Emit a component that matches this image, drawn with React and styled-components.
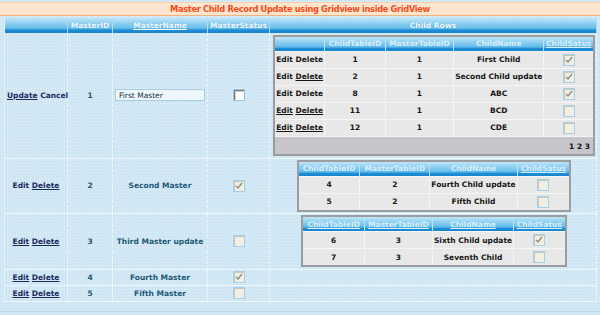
import React from 'react';
import styled, { createGlobalStyle } from 'styled-components';

const GlobalStyle = createGlobalStyle`
  body {
    margin: 0;
    background-color: #cfe7f4;
    background-image: radial-gradient(rgba(255, 255, 255, 0.35) 0.6px, transparent 0.8px);
    background-size: 3px 3px;
    font-family: "DejaVu Sans", Verdana, sans-serif;
  }
`;

const headGradient = `linear-gradient(
  #bfe5f8 0%, #8fd0f1 35%, #6cc0ec 62%, #57b4e6 74%, #1f8fd7 78%, #1884cc 100%
)`;

const master = [
  { id: 1, name: 'First Master', status: false, editing: true, height: 125, links: [true, false] },
  { id: 2, name: 'Second Master', status: true, height: 55, links: [false, true] },
  { id: 3, name: 'Third Master update', status: false, height: 56, links: [true, true] },
  { id: 4, name: 'Fourth Master', status: true, height: 16, links: [true, true] },
  { id: 5, name: 'Fifth Master', status: false, height: 16, links: [true, true] },
];

const childTables = {
  1: {
    masterId: 1,
    withEdit: true,
    widths: [51, 62, 70, 88, 51],
    underlined: [false, false, false, true],
    pager: true,
    rows: [
      { id: 1, name: 'First Child', status: true, links: [false, false] },
      { id: 2, name: 'Second Child update', status: true, links: [false, true] },
      { id: 8, name: 'ABC', status: true, links: [false, false] },
      { id: 11, name: 'BCD', status: false, links: [true, true] },
      { id: 12, name: 'CDE', status: false, links: [true, true] },
    ],
  },
  2: {
    masterId: 2,
    widths: [62, 70, 86, 53],
    underlined: [false, false, false, true],
    rows: [
      { id: 4, name: 'Fourth Child update', status: false },
      { id: 5, name: 'Fifth Child', status: false },
    ],
  },
  3: {
    masterId: 3,
    widths: [62, 68, 80, 52],
    underlined: [true, true, true, true],
    rows: [
      { id: 6, name: 'Sixth Child update', status: true },
      { id: 7, name: 'Seventh Child', status: false },
    ],
  },
};

const childHeads = ['ChildTableID', 'MasterTableID', 'ChildName', 'ChildSatus'];

function Check({ checked, editable }) {
  return (
    <CheckBox $editable={editable}>
      {checked && (
        <svg width="8" height="8" viewBox="0 0 8 8">
          <polyline points="1,4 3,6 7,1" fill="none" stroke="#8f8f86" strokeWidth="1.4" />
        </svg>
      )}
    </CheckBox>
  );
}

function ChildGrid({ table }) {
  const { withEdit, widths, underlined, rows, pager, masterId } = table;
  return (
    <ChildTable>
      <colgroup>
        {widths.map((w, i) => <col key={i} style={{ width: w }} />)}
      </colgroup>
      <thead>
        <tr>
          {withEdit && <ChildHead />}
          {childHeads.map((h, i) => (
            <ChildHead key={h}>
              <HeadLabel $u={underlined[i]}>{h}</HeadLabel>
            </ChildHead>
          ))}
        </tr>
      </thead>
      <tbody>
        {rows.map((r) => (
          <tr key={r.id}>
            {withEdit && (
              <ChildCell>
                <ChildLink $u={r.links[0]}>Edit</ChildLink>{' '}
                <ChildLink $u={r.links[1]}>Delete</ChildLink>
              </ChildCell>
            )}
            <ChildCell>{r.id}</ChildCell>
            <ChildCell>{masterId}</ChildCell>
            <ChildCell>{r.name}</ChildCell>
            <ChildCell><Check checked={r.status} /></ChildCell>
          </tr>
        ))}
        {pager && (
          <tr>
            <Pager colSpan={5}>1 2 3</Pager>
          </tr>
        )}
      </tbody>
    </ChildTable>
  );
}

export default function App() {
  return (
    <Page>
      <GlobalStyle />
      <TitleBar>Master Child Record Update using Gridview inside GridView</TitleBar>
      <Frame>
        <MasterTable>
          <colgroup>
            <col style={{ width: 63 }} />
            <col style={{ width: 45 }} />
            <col style={{ width: 95 }} />
            <col style={{ width: 62 }} />
            <col />
          </colgroup>
          <thead>
            <tr>
              <MasterHead />
              <MasterHead>MasterID</MasterHead>
              <MasterHead><HeadLabel $u>MasterName</HeadLabel></MasterHead>
              <MasterHead>MasterStatus</MasterHead>
              <MasterHead>Child Rows</MasterHead>
            </tr>
          </thead>
          <tbody>
            {master.map((m) => (
              <MasterRow key={m.id} $h={m.height}>
                <MasterCell>
                  <MasterLink $u={m.links[0]}>{m.editing ? 'Update' : 'Edit'}</MasterLink>{' '}
                  <MasterLink $u={m.links[1]}>{m.editing ? 'Cancel' : 'Delete'}</MasterLink>
                </MasterCell>
                <MasterCell>{m.id}</MasterCell>
                <MasterCell>
                  {m.editing ? <NameInput value={m.name} readOnly /> : m.name}
                </MasterCell>
                <MasterCell>
                  <Check checked={m.status} editable={m.editing} />
                </MasterCell>
                <ChildRowsCell>
                  {childTables[m.id] && <ChildGrid table={childTables[m.id]} />}
                </ChildRowsCell>
              </MasterRow>
            ))}
          </tbody>
        </MasterTable>
      </Frame>
    </Page>
  );
}

const Page = styled.div`
  padding-top: 2px;
  width: 600px;
`;

const TitleBar = styled.div`
  height: 12px;
  line-height: 12px;
  background: #fde6cd;
  border-top: 1px solid #fbd2ad;
  border-bottom: 1px solid #f2b27a;
  color: #f24d1c;
  font-size: 8.3px;
  font-weight: bold;
  letter-spacing: -0.35px;
  text-align: center;
`;

const Frame = styled.div`
  margin-top: 2px;
  padding: 0 3px 9px 4px;
  border-bottom: 1px solid #b9d9ea;
`;

const MasterTable = styled.table`
  width: 593px;
  table-layout: fixed;
  border-collapse: collapse;
  border-left: 1px solid #e3f1f8;
  border-bottom: 1px solid #c4dbe6;
`;

const MasterHead = styled.th`
  height: 15px;
  padding: 0;
  background: ${headGradient};
  border-right: 1px solid #a9dbf3;
  color: #f2f9fe;
  font-size: 7.5px;
  font-weight: bold;
  text-align: center;
  text-shadow: 0 0 1px #4aa6d8;
`;

const HeadLabel = styled.span`
  text-decoration: ${(p) => (p.$u ? 'underline' : 'none')};
`;

const MasterRow = styled.tr`
  height: ${(p) => p.$h}px;
`;

const MasterCell = styled.td`
  padding: 0 2px;
  border-right: 1px dashed #eef7fc;
  border-bottom: 1px solid #eef7fc;
  color: #1d5878;
  font-size: 7.5px;
  font-weight: bold;
  text-align: center;
  vertical-align: middle;
  white-space: nowrap;
`;

const ChildRowsCell = styled(MasterCell)`
  padding: 1px 1px 1px 3px;
`;

const MasterLink = styled.span`
  color: #1b2a5e;
  text-decoration: ${(p) => (p.$u ? 'underline' : 'none')};
`;

const NameInput = styled.input`
  box-sizing: border-box;
  width: 90px;
  height: 12px;
  margin: 0;
  padding: 0 3px;
  border: 1px solid #a7cde3;
  background: #eef7fb;
  color: #1e2f3d;
  font-family: "DejaVu Sans", Verdana, sans-serif;
  font-size: 7.5px;
  text-align: left;
  outline: none;
`;

const CheckBox = styled.span`
  box-sizing: border-box;
  display: inline-flex;
  align-items: center;
  justify-content: center;
  width: 12px;
  height: 12px;
  vertical-align: middle;
  border: 1px solid ${(p) => (p.$editable ? '#9bc6e0' : '#a5d0ea')};
  background: ${(p) => (p.$editable ? '#ffffff' : '#f1eee3')};
  box-shadow: ${(p) =>
    p.$editable
      ? 'inset 1px 1px 0 #7a7a7a, inset 2px 2px 0 #d4d0c8'
      : 'inset 1px 1px 0 #c9c6ba'};
`;

const ChildTable = styled.table`
  margin: 0 auto;
  table-layout: fixed;
  border-collapse: collapse;
  border: 2px solid #9d9d9f;
  background-color: #e2e2e2;
  background-image: radial-gradient(rgba(255, 255, 255, 0.45) 0.6px, transparent 0.8px);
  background-size: 2px 2px;
`;

const ChildHead = styled.th`
  height: 14px;
  padding: 0;
  background: ${headGradient};
  border-right: 1px solid #bfe3f6;
  color: #d9eefb;
  font-size: 7.5px;
  font-weight: bold;
  text-align: center;
  white-space: nowrap;
`;

const ChildCell = styled.td`
  height: 16px;
  padding: 0 1px;
  border: 1px solid #f5f5f5;
  color: #161616;
  font-size: 7.5px;
  font-weight: bold;
  text-align: center;
  vertical-align: middle;
  white-space: nowrap;
`;

const ChildLink = styled.span`
  text-decoration: ${(p) => (p.$u ? 'underline' : 'none')};
`;

const Pager = styled.td`
  height: 17px;
  padding: 0 3px 0 0;
  background: #c6c6ca;
  color: #111;
  font-size: 7.5px;
  font-weight: bold;
  text-align: right;
  vertical-align: bottom;
  line-height: 14px;
`;
